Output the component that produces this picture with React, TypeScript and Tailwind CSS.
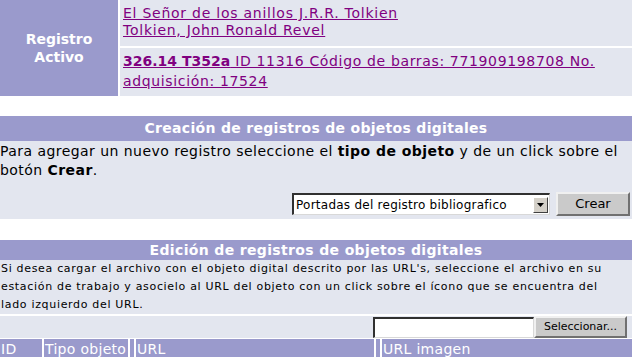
import React from 'react';

const purple = 'bg-[#9a9acc]';

export default function App() {
  return (
    <div className="w-[632px] h-[357px] overflow-hidden bg-white font-['DejaVu_Sans',sans-serif] text-black">
      {/* ── Registro activo ─────────────────────────────────────────── */}
      <div className="flex h-[96px]">
        <div className={`w-[118px] ${purple} flex items-center justify-center text-center text-white font-bold text-[14px] leading-[18px]`}>
          Registro
          <br />
          Activo
        </div>
        <div className="ml-[2px] flex-1 flex flex-col gap-[2px]">
          <div className="h-[46px] bg-[#e3e6ef] pl-[3px] pt-[5px] text-[14px] leading-[17px] tracking-[0.75px] text-[#800080]">
            <a className="underline">El Señor de los anillos J.R.R. Tolkien</a>
            <br />
            <a className="underline">Tolkien, John Ronald Revel</a>
          </div>
          <div className="flex-1 bg-[#e3e6ef] pl-[3px] pt-[3px] text-[14px] leading-[20px] tracking-[0.65px] text-[#800080] whitespace-nowrap">
            <a className="underline">
              <b className="tracking-normal">326.14 T352a</b> ID 11316 Código de barras: 771909198708 No.
              <br />
              adquisición: 17524
            </a>
          </div>
        </div>
      </div>

      {/* ── Creación ────────────────────────────────────────────────── */}
      <div className="mt-[20px] bg-[#e3e6ef]">
        <div className={`${purple} h-[25px] flex items-center justify-center text-white font-bold text-[14px] tracking-[0.3px]`}>
          Creación de registros de objetos digitales
        </div>
        <div className="text-[14px] leading-[19px] pt-[1px] tracking-[0.45px] whitespace-nowrap">
          Para agregar un nuevo registro seleccione el <b>tipo de objeto</b> y de un click sobre el
          <br />
          botón <b>Crear</b>.
        </div>
        <div className="flex justify-end items-center gap-[6px] pr-[2px] pt-[12px] pb-[3px]">
          <div className="w-[258px] h-[22px] bg-white border-t-2 border-l-2 border-t-[#303030] border-l-[#303030] border-b border-r border-b-[#d8d8d8] border-r-[#d8d8d8] flex items-center justify-between text-[12px] tracking-[0.25px] pl-[2px]">
            <span>Portadas del registro bibliografico</span>
            <span className="w-[15px] h-[16px] mr-[1px] bg-[#d4d0c8] border border-t-white border-l-white border-b-[#404040] border-r-[#404040] flex items-center justify-center">
              <svg width="7" height="4" viewBox="0 0 7 4">
                <path d="M0 0h7L3.5 4z" fill="#000" />
              </svg>
            </span>
          </div>
          <button className="w-[74px] h-[24px] bg-[#cacaca] border-2 border-t-[#f0f0f0] border-l-[#f0f0f0] border-b-[#707070] border-r-[#707070] text-[13px]">
            Crear
          </button>
        </div>
      </div>

      {/* ── Edición ─────────────────────────────────────────────────── */}
      <div className="mt-[21px] bg-[#e3e6ef]">
        <div className={`${purple} h-[20px] flex items-center justify-center text-white font-bold text-[14px] tracking-[0.35px]`}>
          Edición de registros de objetos digitales
        </div>
        <div className="text-[11px] leading-[18px] tracking-[0.68px] pl-[1px] whitespace-nowrap">
          Si desea cargar el archivo con el objeto digital descrito por las URL's, seleccione el archivo en su
          <br />
          estación de trabajo y asocielo al URL del objeto con un click sobre el ícono que se encuentra del
          <br />
          lado izquierdo del URL.
        </div>
        <div className="border-t-2 border-white h-[24px] flex justify-end items-center pr-[5px]">
          <div className="w-[161px] h-[21px] bg-white border-t-2 border-l-2 border-t-[#303030] border-l-[#303030] border-b border-r border-b-[#d8d8d8] border-r-[#d8d8d8]" />
          <button className="w-[93px] h-[22px] bg-[#cacaca] border-2 border-t-[#f0f0f0] border-l-[#f0f0f0] border-b-[#707070] border-r-[#707070] text-[11px]">
            Seleccionar...
          </button>
        </div>
      </div>
      <div className="mt-[1px] flex gap-[2px] h-[21px] text-white text-[14px] leading-[21px] tracking-[0.3px]">
        <div className={`w-[42px] ${purple} pl-[1px]`}>ID</div>
        <div className={`w-[84px] ${purple} pl-[1px]`}>Tipo objeto</div>
        <div className={`w-[4px] ${purple}`} />
        <div className={`w-[238px] ${purple} pl-[1px]`}>URL</div>
        <div className={`w-[4px] ${purple}`} />
        <div className={`flex-1 ${purple} pl-[1px]`}>URL imagen</div>
      </div>
    </div>
  );
}
